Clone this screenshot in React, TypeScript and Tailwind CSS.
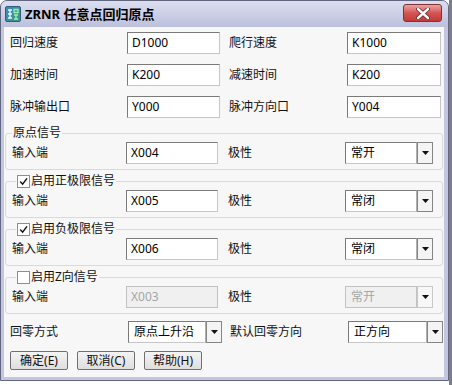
import React from 'react';

type BoxProps = { value: string; className?: string; disabled?: boolean };

function TextBox({ value, className = '', disabled = false }: BoxProps) {
  return (
    <div
      className={`h-[22px] flex items-center pl-[4px] border ${
        disabled
          ? 'bg-[#f0f0f0] border-[#c2c2c2] text-[#a6a6a6]'
          : 'bg-white border-t-[#7a7a7a] border-l-[#7a7a7a] border-r-[#c6c6c6] border-b-[#c6c6c6] text-black'
      } ${className}`}
    >
      {value}
    </div>
  );
}

function Combo({ value, className = '', disabled = false }: BoxProps) {
  return (
    <div className={`h-[22px] flex ${className}`}>
      <div
        className={`flex-1 flex items-center pl-[5px] border ${
          disabled
            ? 'bg-[#f0f0f0] border-[#c2c2c2] text-[#a6a6a6]'
            : 'bg-white border-t-[#7a7a7a] border-l-[#7a7a7a] border-r-[#b0b0b0] border-b-[#c6c6c6] text-black'
        }`}
      >
        {value}
      </div>
      <div
        className={`w-[16px] flex items-center justify-center border ${
          disabled ? 'bg-[#f7f7f7] border-[#c8c8c8]' : 'bg-[#f4f4f4] border-[#858585]'
        }`}
      >
        <svg width="7" height="4" viewBox="0 0 7 4">
          <path d="M0 0h7L3.5 4z" fill="#111" />
        </svg>
      </div>
    </div>
  );
}

function CheckBox({ checked }: { checked: boolean }) {
  return (
    <span className="w-[13px] h-[13px] border border-[#8e8f8f] bg-white flex items-center justify-center">
      {checked && (
        <svg width="11" height="11" viewBox="0 0 11 11">
          <path d="M2.2 5.6l2.4 2.6L9 2.4" fill="none" stroke="#111" strokeWidth="1.5" />
        </svg>
      )}
    </span>
  );
}

function Group({
  title,
  check,
  input,
  polarity,
  disabled = false,
}: {
  title: string;
  check?: boolean;
  input: string;
  polarity: string;
  disabled?: boolean;
}) {
  return (
    <fieldset className="w-[438px] ml-[1px] border border-[#dadada] rounded-[3px] px-[6px] pb-[5px]">
      <legend className={`h-[16px] flex items-center gap-[1px] px-[1px] ${check === undefined ? '' : 'ml-[4px]'}`}>
        {check !== undefined && <CheckBox checked={check} />}
        <span>{title}</span>
      </legend>
      <div className="flex items-center mt-[1px]">
        <span className="w-[114px]">输入端</span>
        <TextBox value={input} disabled={disabled} className="w-[92px]" />
        <span className="w-[117px] ml-[10px]">极性</span>
        <Combo value={polarity} disabled={disabled} className="w-[88px]" />
      </div>
    </fieldset>
  );
}

function Button({ label }: { label: string }) {
  return (
    <button className="w-[58px] h-[19px] border border-[#707070] rounded-[2px] bg-linear-to-b from-[#f4f4f4] to-[#dedede] flex items-center justify-center leading-none">
      {label}
    </button>
  );
}

export default function App() {
  return (
    <div className="w-[452px] h-[385px] bg-white flex [font-family:'Noto_Sans','Noto_Sans_CJK_SC',sans-serif] text-[12px] text-[#111]">
      <div className="w-[449px] h-[381px] bg-[#c3c6e0] border border-[#62667e] rounded-t-[7px] flex flex-col">
        {/* Title bar */}
        <div className="h-[26px] flex items-start pl-[4px] rounded-t-[6px] bg-linear-to-b from-[#dcdef0] to-[#bdc0dc]">
          <svg width="16" height="16" viewBox="0 0 16 16" className="mt-[5px]">
            <defs>
              <linearGradient id="ic" x1="0" y1="0" x2="1" y2="1">
                <stop offset="0" stopColor="#3f86b8" />
                <stop offset="1" stopColor="#3a9c86" />
              </linearGradient>
            </defs>
            <rect x="0.5" y="0.5" width="15" height="15" rx="1.5" fill="url(#ic)" stroke="#2d5f7a" />
            <path d="M3 4h4M5 4v8M3 8h4M3 12h4" stroke="#e8f6ff" strokeWidth="1.4" fill="none" />
            <path d="M9 3.5h4v3h-4zM9 9h4M11 9v4M9 13h4" stroke="#9ef0a8" strokeWidth="1.3" fill="none" />
          </svg>
          <span className="ml-[4px] mt-[5px] text-[13px] font-bold leading-[16px] text-black">ZRNR 任意点回归原点</span>
          <div className="ml-auto mr-[6px] mt-[3px] w-[39px] h-[18px] rounded-[3px] border border-[#7a3434] bg-linear-to-b from-[#eaa3a3] via-[#d45454] to-[#c53a3a] flex items-center justify-center">
            <svg width="14" height="11" viewBox="0 0 14 11">
              <path d="M2 1l10 9M12 1L2 10" stroke="#6b2020" strokeWidth="4" strokeLinecap="round" />
              <path d="M2 1l10 9M12 1L2 10" stroke="#ffffff" strokeWidth="2.4" strokeLinecap="round" />
            </svg>
          </div>
        </div>

        {/* Client area */}
        <div className="ml-[3px] w-[440px] h-[350px] bg-[#f7f7f7] flex flex-col pt-[5px]">
          <div className="flex items-center pl-[6px]">
            <span className="w-[117px]">回归速度</span>
            <TextBox value="D1000" className="w-[93px]" />
            <span className="w-[118px] ml-[9px]">爬行速度</span>
            <TextBox value="K1000" className="w-[94px]" />
          </div>
          <div className="flex items-center pl-[6px] mt-[10px]">
            <span className="w-[117px]">加速时间</span>
            <TextBox value="K200" className="w-[93px]" />
            <span className="w-[118px] ml-[9px]">减速时间</span>
            <TextBox value="K200" className="w-[94px]" />
          </div>
          <div className="flex items-center pl-[6px] mt-[10px]">
            <span className="w-[117px]">脉冲输出口</span>
            <TextBox value="Y000" className="w-[93px]" />
            <span className="w-[118px] ml-[9px]">脉冲方向口</span>
            <TextBox value="Y004" className="w-[94px]" />
          </div>

          <div className="flex flex-col gap-[3px] mt-[7px]">
            <Group title="原点信号" input="X004" polarity="常开" />
            <Group title="启用正极限信号" check={true} input="X005" polarity="常闭" />
            <Group title="启用负极限信号" check={true} input="X006" polarity="常闭" />
            <Group title="启用Z向信号" check={false} input="X003" polarity="常开" disabled />
          </div>

          <div className="flex items-center pl-[6px] mt-[7px]">
            <span className="w-[118px]">回零方式</span>
            <Combo value="原点上升沿" className="w-[94px]" />
            <span className="w-[118px] ml-[8px]">默认回零方向</span>
            <Combo value="正方向" className="w-[95px]" />
          </div>

          <div className="flex items-center gap-[9px] pl-[6px] mt-[8px]">
            <Button label="确定(E)" />
            <Button label="取消(C)" />
            <Button label="帮助(H)" />
          </div>
        </div>
      </div>
      <div className="w-[3px] h-[385px] bg-[#7c7e8c]" />
    </div>
  );
}
